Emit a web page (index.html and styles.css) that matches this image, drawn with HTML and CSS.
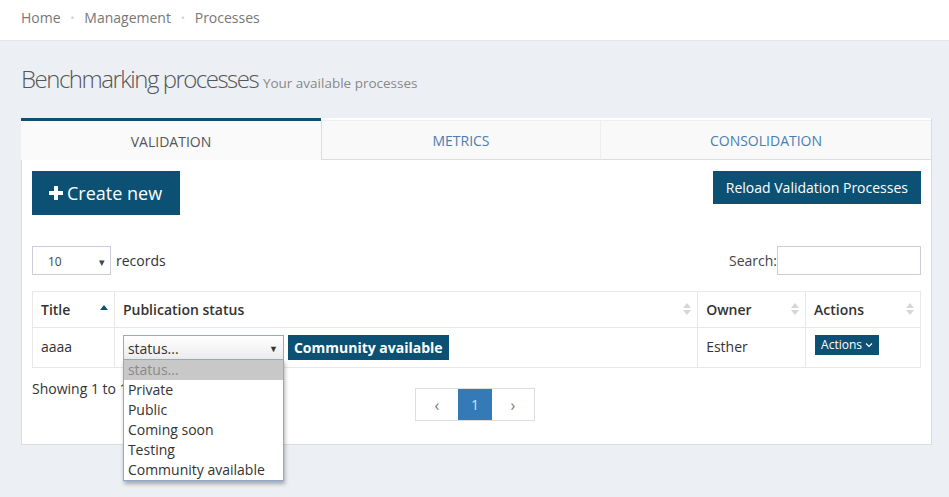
FILE: index.html
```html
<!DOCTYPE html>
<html>
<head>
<meta charset="utf-8">
<link rel="stylesheet" href="styles.css">
</head>
<body>
<header class="crumbs">
  <span>Home</span><span class="dot">•</span><span>Management</span><span class="dot">•</span><span>Processes</span>
</header>
<main class="page">
  <h1 class="title">Benchmarking processes <small>Your available processes</small></h1>
  <section class="panel">
    <nav class="tabs">
      <div class="tab tab-a active">VALIDATION</div>
      <div class="tab tab-b">METRICS</div>
      <div class="tab tab-c">CONSOLIDATION</div>
    </nav>
    <div class="body">
      <div class="toolbar">
        <button class="btn btn-create"><svg width="14" height="14" viewBox="0 0 14 14"><path d="M5 0h4v5h5v4H9v5H5V9H0V5h5z" fill="#fff"/></svg>Create new</button>
        <button class="btn btn-reload">Reload Validation Processes</button>
      </div>
      <div class="controls">
        <div class="len"><div class="len-select"><span>10</span><span class="caret">▾</span></div><span>records</span></div>
        <label class="search">Search:<span class="search-input"></span></label>
      </div>
      <table class="grid">
        <thead>
          <tr>
            <th class="c1">Title<svg class="sort" width="8" height="14" viewBox="0 0 8 14"><path d="M0 8L4 3L8 8z" fill="#0c5173"/></svg></th>
            <th class="c2">Publication status<svg class="sort" width="8" height="14" viewBox="0 0 8 14"><path d="M0 6L4 1L8 6zM0 8L4 13L8 8z" fill="#d6d6d6"/></svg></th>
            <th class="c3">Owner<svg class="sort" width="8" height="14" viewBox="0 0 8 14"><path d="M0 6L4 1L8 6zM0 8L4 13L8 8z" fill="#d6d6d6"/></svg></th>
            <th class="c4">Actions<svg class="sort" width="8" height="14" viewBox="0 0 8 14"><path d="M0 6L4 1L8 6zM0 8L4 13L8 8z" fill="#d6d6d6"/></svg></th>
          </tr>
        </thead>
        <tbody>
          <tr>
            <td>aaaa</td>
            <td>
              <div class="status">
                <div class="fake-select"><span>status...</span><span class="caret2">▼</span>
                  <ul class="options">
                    <li class="sel">status...</li>
                    <li>Private</li>
                    <li>Public</li>
                    <li>Coming soon</li>
                    <li>Testing</li>
                    <li>Community available</li>
                  </ul>
                </div>
                <span class="badge">Community available</span>
              </div>
            </td>
            <td>Esther</td>
            <td><button class="btn btn-actions">Actions<svg width="8" height="6" viewBox="0 0 8 6"><path d="M1 1.5L4 4.5L7 1.5" stroke="#fff" stroke-width="1.1" fill="none"/></svg></button></td>
          </tr>
        </tbody>
      </table>
      <div class="footer">
        <div class="info">Showing 1 to 1 of 1 entries</div>
        <div class="pager">
          <span class="pg">‹</span><span class="pg cur">1</span><span class="pg">›</span>
        </div>
      </div>
    </div>
  </section>
</main>
</body>
</html>
```
FILE: styles.css
```css
* { box-sizing: border-box; }
html, body { margin: 0; padding: 0; }
body {
  font-family: "Open Sans", "Liberation Sans", sans-serif;
  font-size: 14px;
  color: #333;
  background: #ecf0f5;
  height: 497px;
  overflow: hidden;
}
.crumbs {
  height: 41px;
  background: #fff;
  border-bottom: 1px solid #e4e6ea;
  padding: 8px 0 0 21px;
  color: #777;
  font-size: 14px;
  line-height: 20px;
  display: flex;
}
.crumbs .dot { color: #ccc; font-size: 10px; margin: 0 10px 0 10px; }
.page { padding: 0 17px 0 21px; }
.title {
  margin: 0;
  padding: 23px 0 0 0;
  height: 77px;
  font-weight: 300;
  font-size: 24px;
  line-height: 30px;
  color: #555;
  letter-spacing: -1.5px;
}
.title small { font-size: 13.5px; color: #888; letter-spacing: 0; font-weight: 400; }
.panel {
  background: #fff;
  border: 1px solid #dcdcdc;
  border-top: none;
  height: 327px;
}
.tabs { display: flex; height: 42px; }
.tab {
  background: #f9f9f9;
  border-top: 1px solid #eee;
  border-bottom: 1px solid #ddd;
  margin-top: 2px;
  height: 40px;
  display: flex;
  align-items: center;
  justify-content: center;
  font-size: 14px;
  color: #4a7db3;
  padding-top: 1px;
}
.tab-a { flex: 0 0 299px; }
.tab-b { flex: 0 0 279px; border-left: 1px solid #ddd; }
.tab-c { flex: 1; border-left: 1px solid #eee; }
.tab.active {
  margin-top: 0;
  height: 42px;
  border-top: 3px solid #0c5173;
  border-bottom: none;
  background: #fafafa;
  color: #555;
  margin-left: -1px;
  flex-basis: 300px;
}
.body { padding: 11px 10px 0 10px; }
.toolbar { display: flex; justify-content: space-between; align-items: flex-start; }
.btn {
  font-family: inherit;
  border: none;
  background: #0c5173;
  color: #fff;
  cursor: pointer;
  display: inline-flex;
  align-items: center;
}
.btn-create {
  height: 44px;
  width: 148px;
  font-size: 18px;
  padding: 0 0 0 17px;
}
.btn-create svg { margin-right: 4px; }
.btn-reload {
  height: 33px;
  font-size: 14px;
  padding: 0 13px;
}
.controls {
  display: flex;
  justify-content: space-between;
  align-items: center;
  margin-top: 31px;
  height: 29px;
}
.len { display: flex; align-items: center; gap: 5px; }
.len-select {
  width: 79px;
  height: 29px;
  border: 1px solid #ccd;
  display: flex;
  align-items: center;
  justify-content: space-between;
  padding: 2px 5px 0 15px;
  font-size: 12px;
  color: #444;
}
.len-select .caret { font-size: 11px; color: #444; }
.search { display: flex; align-items: center; color: #444; }
.search-input { width: 144px; height: 29px; border: 1px solid #ccd; margin-left: 0; }
.grid {
  margin-top: 16px;
  width: 889px;
  border-collapse: collapse;
  border: 1px solid #e8e8e8;
}
.grid th, .grid td { border: 1px solid #e8e8e8; text-align: left; padding: 0 8px; }
.grid th {
  height: 36px;
  font-weight: 600;
  position: relative;
  padding-top: 0;
}
.grid td { height: 40px; padding-bottom: 3px; }
.grid .c1 { width: 82px; }
.grid .c2 { width: 584px; }
.grid .c3 { width: 108px; }
.grid .c4 { width: 115px; }
.sort { position: absolute; right: 6px; top: 10px; }
.status { display: flex; align-items: center; gap: 4px; margin-top: 3px; }
.fake-select {
  position: relative;
  width: 161px;
  height: 25px;
  border: 1px solid #8faad2;
  background: linear-gradient(#fff, #ececec);
  display: flex;
  align-items: center;
  justify-content: space-between;
  padding: 2px 5px 0 4px;
}
.caret2 { font-size: 9px; color: #333; }
.options {
  position: absolute;
  left: -1px;
  top: 23px;
  width: 161px;
  margin: 0;
  padding: 0;
  list-style: none;
  background: #fff;
  border: 1px solid #8faad2;
  box-shadow: 1px 3px 4px rgba(0,0,0,0.3);
  z-index: 5;
}
.options li { height: 20px; line-height: 20px; padding: 0 4px; color: #333; }
.options li.sel { background: #c8c8c8; color: #8a8a8a; }
.badge {
  background: #0c5173;
  color: #fff;
  font-weight: 700;
  height: 25px;
  line-height: 25px;
  padding: 0 6px;
}
.btn-actions {
  height: 20px;
  font-size: 12px;
  padding: 0 6px;
  gap: 3px;
  margin-left: 1px;
  margin-bottom: 3px;
}
.footer { display: flex; position: relative; margin-top: 12px; }
.info { color: #333; line-height: 18px; }
.pager {
  position: absolute;
  left: 383px;
  top: 8px;
  display: flex;
  border: 1px solid #ddd;
  height: 33px;
}
.pg {
  display: flex;
  align-items: center;
  justify-content: center;
  width: 42px;
  color: #777;
  font-size: 16px;
}
.pg.cur { width: 34px; background: #337ab7; color: #cfe2f3; font-size: 14px; }
```
